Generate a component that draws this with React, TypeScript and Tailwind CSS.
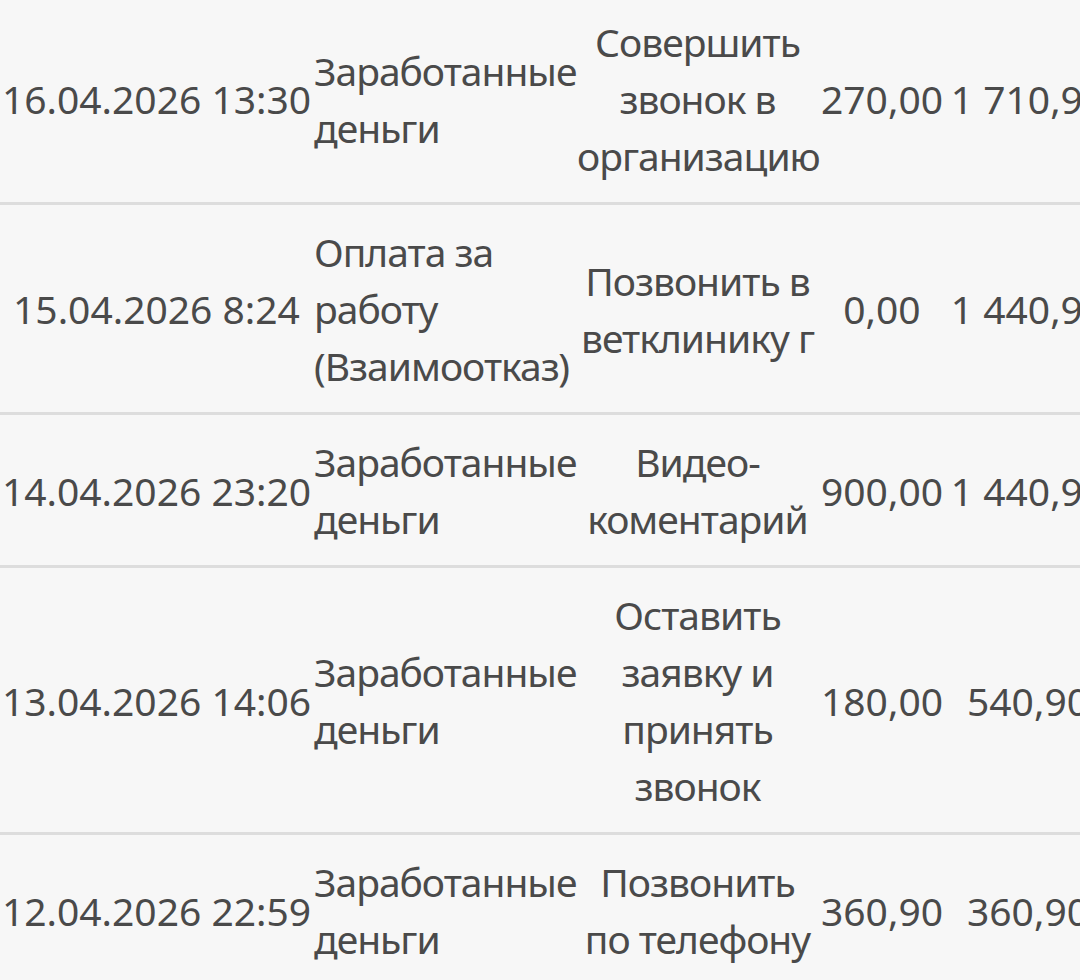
import React from 'react'

interface Row {
  date: string
  type: string[]
  task: string[]
  amount: string
  balance: string
}

const ROWS: Row[] = [
  {
    date: '16.04.2026 13:30',
    type: ['Заработанные', 'деньги'],
    task: ['Совершить', 'звонок в', 'организацию'],
    amount: '270,00',
    balance: '1 710,90',
  },
  {
    date: '15.04.2026 8:24',
    type: ['Оплата за', 'работу', '(Взаимоотказ)'],
    task: ['Позвонить в', 'ветклинику г'],
    amount: '0,00',
    balance: '1 440,90',
  },
  {
    date: '14.04.2026 23:20',
    type: ['Заработанные', 'деньги'],
    task: ['Видео-', 'коментарий'],
    amount: '900,00',
    balance: '1 440,90',
  },
  {
    date: '13.04.2026 14:06',
    type: ['Заработанные', 'деньги'],
    task: ['Оставить', 'заявку и', 'принять', 'звонок'],
    amount: '180,00',
    balance: '540,90',
  },
  {
    date: '12.04.2026 22:59',
    type: ['Заработанные', 'деньги'],
    task: ['Позвонить', 'по телефону'],
    amount: '360,90',
    balance: '360,90',
  },
]

function Lines({ lines }: { lines: string[] }) {
  return (
    <>
      {lines.map((l) => (
        <div key={l} className="whitespace-nowrap">
          {l}
        </div>
      ))}
    </>
  )
}

export default function App() {
  return (
    <div
      className="h-[980px] w-[1080px] overflow-hidden bg-[#f7f7f7] text-[39px] leading-[57px] text-[#4a4a4a]"
      style={{ fontFamily: '"Noto Sans", "Open Sans", sans-serif' }}
    >
      <div className="-mt-[5px] w-[1110px]">
        {ROWS.map((row) => (
          <div
            key={row.date}
            className="grid grid-cols-[313px_264px_241px_128px_164px] items-center border-b-[3px] border-[#dddddd] py-[18px]"
          >
            <div className="text-center whitespace-nowrap">{row.date}</div>
            <div className="pl-[1px] text-left tracking-[-1px]">
              <Lines lines={row.type} />
            </div>
            <div className="text-center tracking-[-1px]">
              <Lines lines={row.task} />
            </div>
            <div className="text-center whitespace-nowrap">{row.amount}</div>
            <div className="text-center whitespace-nowrap">{row.balance}</div>
          </div>
        ))}
      </div>
    </div>
  )
}
